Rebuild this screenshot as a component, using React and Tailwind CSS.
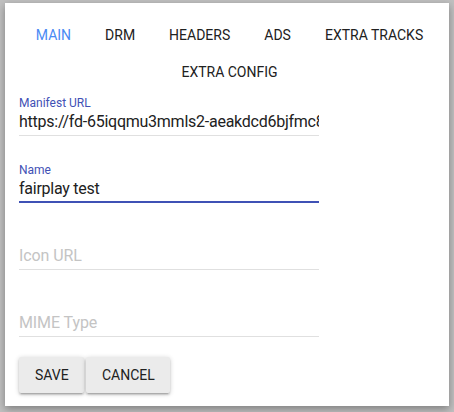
import React from "react";

const tabsRow1 = ["Main", "DRM", "Headers", "Ads", "Extra Tracks"];

function Tab({ label, active }) {
  return (
    <div
      className={
        active
          ? "shrink-0 whitespace-nowrap px-[17px] flex items-center text-[14px] leading-[16px] uppercase text-[#4a8af4]"
          : "shrink-0 whitespace-nowrap px-[17px] flex items-center text-[14px] leading-[16px] uppercase text-[#212121]"
      }
    >
      {label}
    </div>
  );
}

function Field({ label, value, placeholder, focused, className }) {
  return (
    <div className={"w-[300px] flex flex-col " + (className || "")}>
      <div className="h-[14px] text-[12px] leading-[14px] text-[#3f51b5] whitespace-nowrap">
        {label || ""}
      </div>
      <div
        className={
          focused
            ? "mt-[2px] pb-[3px] border-b-2 border-[#3f51b5]"
            : "mt-[2px] pb-[4px] border-b border-[#e0e0e0]"
        }
      >
        <div
          className={
            value
              ? "h-[19px] text-[16px] leading-[19px] tracking-[-0.25px] text-[#212121] overflow-hidden whitespace-nowrap"
              : "h-[19px] text-[16px] leading-[19px] tracking-[-0.1px] text-[#c4c4c4] overflow-hidden whitespace-nowrap"
          }
        >
          {value || placeholder}
        </div>
      </div>
    </div>
  );
}

export default function App() {
  return (
    <div className="min-h-[412px] bg-[#c0c0c0] pt-[3px] px-[5px] pb-[6px] font-['Roboto',sans-serif]">
      <div className="bg-white h-[403px] shadow-[0_3px_8px_rgba(0,0,0,0.35)] pl-[14px] pr-[9px] pt-[13px]">
        <div className="flex flex-col">
          <div className="h-[37px] flex justify-center">
            {tabsRow1.map((t, i) => (
              <Tab key={t} label={t} active={i === 0} />
            ))}
          </div>
          <div className="h-[37px] flex justify-center">
            <Tab label="Extra Config" />
          </div>
        </div>
        <Field
          className="mt-[6px]"
          label="Manifest URL"
          value="https://fd-65iqqmu3mmls2-aeakdcd6bjfmc8.z01.azurefd.net/fairplay/master.m3u8"
        />
        <Field className="mt-[27px]" label="Name" value="fairplay test" focused />
        <Field className="mt-[27px]" placeholder="Icon URL" />
        <Field className="mt-[27px]" placeholder="MIME Type" />
        <div className="mt-[20px] flex gap-[2px]">
          <button className="h-[36px] min-w-[64px] w-[65px] px-4 rounded-[2px] bg-[#ebebeb] text-[14px] uppercase text-[#212121] shadow-[0_1px_5px_rgba(0,0,0,0.2),0_2px_2px_rgba(0,0,0,0.14),0_3px_1px_-2px_rgba(0,0,0,0.12)]">
            Save
          </button>
          <button className="h-[36px] min-w-[64px] w-[84px] px-4 rounded-[2px] bg-[#ebebeb] text-[14px] uppercase text-[#212121] shadow-[0_1px_5px_rgba(0,0,0,0.2),0_2px_2px_rgba(0,0,0,0.14),0_3px_1px_-2px_rgba(0,0,0,0.12)]">
            Cancel
          </button>
        </div>
      </div>
    </div>
  );
}
